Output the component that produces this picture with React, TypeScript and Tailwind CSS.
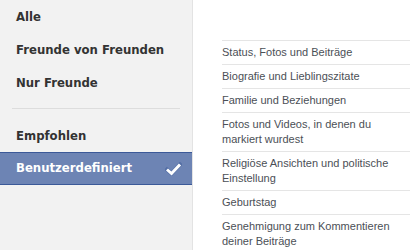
import React from "react";

const left = ["Alle", "Freunde von Freunden", "Nur Freunde"];
const right = [
  ["Status, Fotos und Beiträge"],
  ["Biografie und Lieblingszitate"],
  ["Familie und Beziehungen"],
  ["Fotos und Videos, in denen du", "markiert wurdest"],
  ["Religiöse Ansichten und politische", "Einstellung"],
  ["Geburtstag"],
  ["Genehmigung zum Kommentieren", "deiner Beiträge"],
];

export default function App() {
  return (
    <div
      className="w-[410px] h-[250px] bg-white flex overflow-hidden"
      style={{ fontFamily: "'DejaVu Sans', 'Liberation Sans', sans-serif" }}
    >
      <div className="w-[193px] shrink-0 bg-[#f2f2f2] border-r border-[#e3e3e3] pt-[1px] flex flex-col">
        {left.map((t) => (
          <div key={t} className="h-[33px] flex items-center pl-[16px] text-[11.7px] font-bold text-[#333333]">
            {t}
          </div>
        ))}
        <div className="mx-[12px] mt-[8px] h-px bg-[#dddddd]" />
        <div className="h-[33px] mt-[11px] flex items-center pl-[16px] text-[11.7px] font-bold text-[#333333]">
          Empfohlen
        </div>
        <div className="h-[33px] -mt-px flex items-center justify-between pl-[16px] pr-[10px] text-[11.7px] font-bold text-white bg-[#6d84b4] border-y border-[#3b5998]">
          <span>Benutzerdefiniert</span>
          <svg width="17" height="14" viewBox="0 0 17 14">
            <path d="M2 7.5 L6.5 11.5 L15 2.5" fill="none" stroke="#3b5998" strokeWidth="4" strokeLinecap="square" opacity="0.5" />
            <path d="M2 7.5 L6.5 11.5 L15 2.5" fill="none" stroke="#ffffff" strokeWidth="3" />
          </svg>
        </div>
      </div>
      <div
        className="flex-1 pl-[29px] pt-[40px]"
        style={{ fontFamily: "'Liberation Sans', Arial, sans-serif" }}
      >
        {right.map((lines, i) => (
          <div key={i} className="border-t border-[#e5e5e5] pt-[4px] pb-[4px] text-[11px] leading-[15px] text-[#4b4f56]">
            {lines.map((l) => (
              <div key={l}>{l}</div>
            ))}
          </div>
        ))}
      </div>
    </div>
  );
}
